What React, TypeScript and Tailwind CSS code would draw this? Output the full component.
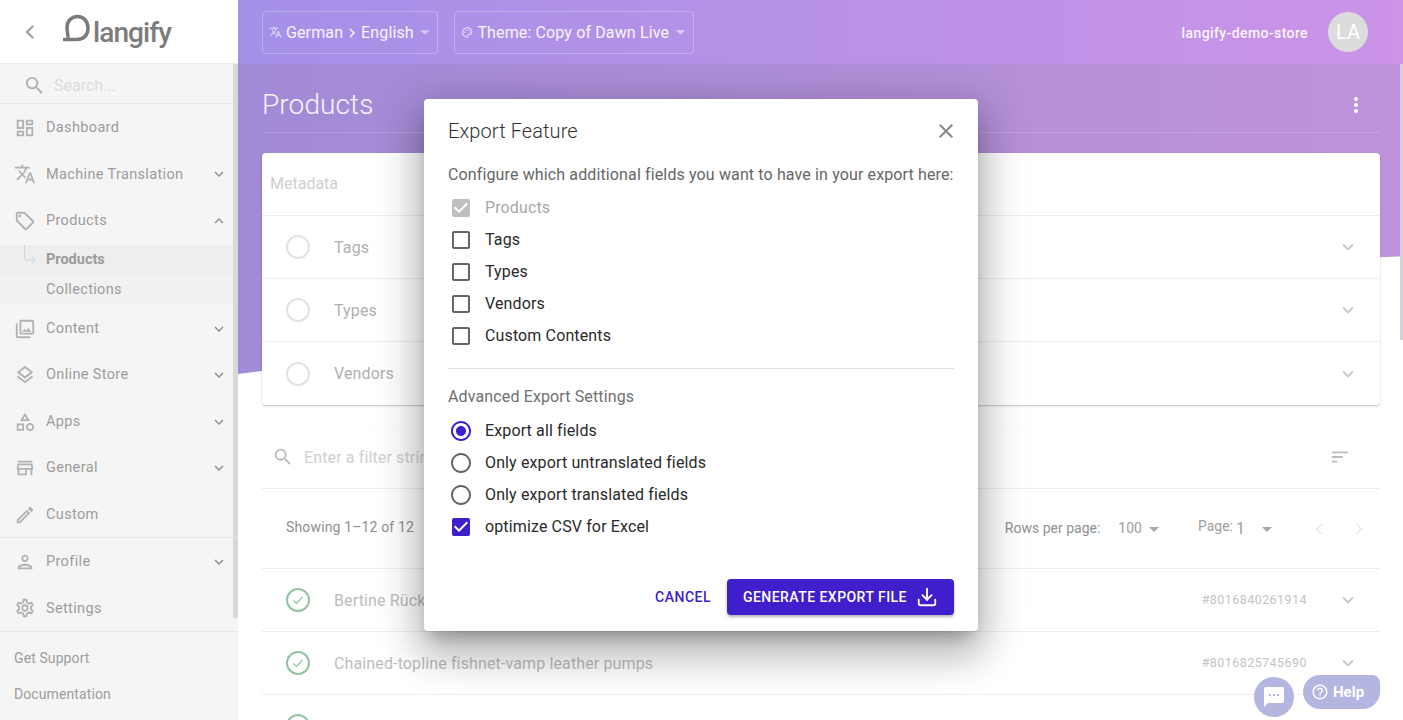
import React from 'react';
import { Download } from 'lucide-react';
import {
  MdArrowDropDown,
  MdCheckBox,
  MdCheckBoxOutlineBlank,
  MdChevronLeft,
  MdChevronRight,
  MdClose,
  MdExpandLess,
  MdExpandMore,
  MdHelpOutline,
  MdMoreVert,
  MdOutlineCategory,
  MdOutlineDashboard,
  MdOutlineEdit,
  MdOutlineLayers,
  MdOutlineLocalOffer,
  MdOutlinePalette,
  MdOutlinePerson,
  MdOutlinePhotoLibrary,
  MdOutlineSettings,
  MdOutlineStore,
  MdRadioButtonChecked,
  MdRadioButtonUnchecked,
  MdSearch,
  MdSms,
  MdSort,
  MdTranslate,
} from 'react-icons/md';

type NavItem = { label: string; icon: React.ElementType; open?: boolean; chevron?: boolean };

const navTop: NavItem[] = [
  { label: 'Dashboard', icon: MdOutlineDashboard },
  { label: 'Machine Translation', icon: MdTranslate, chevron: true },
  { label: 'Products', icon: MdOutlineLocalOffer, chevron: true, open: true },
];

const navMiddle: NavItem[] = [
  { label: 'Content', icon: MdOutlinePhotoLibrary, chevron: true },
  { label: 'Online Store', icon: MdOutlineLayers, chevron: true },
  { label: 'Apps', icon: MdOutlineCategory, chevron: true },
  { label: 'General', icon: MdOutlineStore, chevron: true },
  { label: 'Custom', icon: MdOutlineEdit },
];

const navBottom: NavItem[] = [
  { label: 'Profile', icon: MdOutlinePerson, chevron: true },
  { label: 'Settings', icon: MdOutlineSettings },
];

const NavRow = ({ item, height = 'h-[46.8px]' }: { item: NavItem; height?: string }) => {
  const Icon = item.icon;
  return (
    <div className={`${height} flex items-center pl-[14px] pr-[5px] text-[14.5px] text-[#9c9c9c]`}>
      <Icon className="w-[22px] h-[22px] text-[#b2b2b2] shrink-0" />
      <span className="ml-[10px] flex-1 tracking-[0.35px]">{item.label}</span>
      {item.chevron &&
        (item.open ? (
          <MdExpandLess className="w-[18px] h-[18px] text-[#8f8f8f]" />
        ) : (
          <MdExpandMore className="w-[18px] h-[18px] text-[#8f8f8f]" />
        ))}
    </div>
  );
};

const Sidebar = () => (
  <aside className="w-[238px] shrink-0 h-full flex flex-col bg-[#f5f5f5] relative z-10">
    <div className="h-[64px] bg-white border-b border-[#ececec] flex items-center shrink-0">
      <MdChevronLeft className="w-[28px] h-[28px] ml-[16px] text-[#a8a8a8]" />
      <svg viewBox="0 0 28 27" className="w-[28px] h-[28px] ml-[19px] mb-[7px] text-[#7c7c7c]" fill="none">
        <path
          d="M1 25 H14 C21 25 25 20 25 14 C25 7 21 2 14.5 2 C8 2 4 7 4 13 C4 17 5 20 5 22"
          stroke="currentColor"
          strokeWidth="3.5"
          strokeLinecap="round"
        />
      </svg>
      <span className="ml-[2px] text-[28px] leading-none font-medium tracking-[-0.9px] text-[#7c7c7c] mt-[3px]">langify</span>
    </div>
    <div className="flex-1 min-h-0 flex">
      <div className="flex-1 min-w-0">
        <div className="h-[40.2px] border-b border-[#e8e8e8] flex items-center pl-[23px] pt-[4px]">
          <MdSearch className="w-[23px] h-[23px] text-[#b0b0b0]" />
          <span className="ml-[8px] text-[16px] text-[#dcdcdc]">Search...</span>
        </div>
        {navTop.map((item) => (
          <NavRow key={item.label} item={item} />
        ))}
        <div className="bg-[#f1f1f1] h-[60.7px] text-[14.5px] text-[#9c9c9c] tracking-[0.35px]">
          <div className="relative h-[30.35px] bg-[#eeeeee] flex items-center pl-[46px] pt-px font-bold tracking-normal">
            <svg viewBox="0 0 12 19" className="absolute left-[24px] top-0 w-[12px] h-[19px] text-[#d4d4d4]" fill="none" stroke="currentColor" strokeWidth="1">
              <path d="M0.5 0 V13 Q0.5 15 2.5 15 H11 M8 12 L11 15 L8 18" />
            </svg>
            Products
          </div>
          <div className="h-[30.35px] flex items-center pl-[46px]">Collections</div>
        </div>
        {navMiddle.map((item) => (
          <NavRow key={item.label} item={item} height="h-[46.5px]" />
        ))}
      </div>
      <div className="w-[5px] h-[554px] bg-[#d9d9d9] shrink-0" />
    </div>
    <div className="absolute left-0 right-0 top-[537px] h-px bg-[#e6e6e6]" />
    <div className="absolute left-0 right-[5px] top-[538.3px]">
      {navBottom.map((item) => (
        <NavRow key={item.label} item={item} />
      ))}
    </div>
    <div className="absolute left-0 right-0 top-[631px] border-t border-[#e6e6e6] pt-[8px] pl-[14px] text-[14px] text-[#9c9c9c] tracking-[0.1px]">
      <div className="h-[36px] flex items-center">Get Support</div>
      <div className="h-[36px] flex items-center">Documentation</div>
    </div>
  </aside>
);

const HeaderSelect = ({ icon, children, width }: { icon: React.ReactNode; children: React.ReactNode; width: string }) => (
  <div className={`h-[43px] ${width} border border-white/25 rounded-[4px] flex items-center pl-[6px] text-[16px] text-white/90`}>
    {icon}
    <span className="ml-[4px] pt-[2px] flex-1 flex items-center whitespace-nowrap tracking-[0.13px]">{children}</span>
    <MdArrowDropDown className="w-[24px] h-[24px] text-white/50 mr-[1px]" />
  </div>
);

const TopBar = () => (
  <header className="h-[64px] shrink-0 flex items-center pl-[24px] pr-[35px] relative">
    <div className="flex gap-[16px]">
      <HeaderSelect width="w-[176px]" icon={<MdTranslate className="w-[14px] h-[14px] text-white/70" />}>
        German
        <MdChevronRight className="w-[18px] h-[18px]" />
        English
      </HeaderSelect>
      <HeaderSelect width="w-[240px]" icon={<MdOutlinePalette className="w-[13px] h-[13px] text-white/70" />}>
        Theme: Copy of Dawn Live
      </HeaderSelect>
    </div>
    <div className="ml-auto flex items-center gap-[20px]">
      <span className="pt-[2px] text-[14px] font-medium tracking-[0.4px] text-white/90">langify-demo-store</span>
      <div className="w-[40px] h-[40px] rounded-full bg-[#dcdcdc] text-white text-[20px] flex items-center justify-center">LA</div>
    </div>
  </header>
);

const EmptyCircle = () => <div className="w-[24px] h-[24px] rounded-full border-2 border-[#e2e2e2] shrink-0" />;

const DoneCircle = () => (
  <svg viewBox="0 0 24 24" className="w-[24px] h-[24px] shrink-0" fill="none" stroke="#91c3a3">
    <circle cx="12" cy="12" r="11" strokeWidth="2" />
    <path d="M7.5 12.5l3 3 6-6.5" strokeWidth="1.2" />
  </svg>
);

const FeatureRow = ({ label, last }: { label: string; last?: boolean }) => (
  <div className={`h-[63px] flex items-center pl-[24px] pr-[21px] ${last ? '' : 'border-b border-[#eeeeee]'}`}>
    <EmptyCircle />
    <span className="ml-[24px] pt-px flex-1 text-[16px] tracking-[0.13px] text-[#b0b0b0]">{label}</span>
    <MdExpandMore className="w-[22px] h-[22px] text-[#c8c8c8]" />
  </div>
);

const ProductRow = ({ name, id }: { name: string; id?: string }) => (
  <div className="h-[63px] shrink-0 flex items-center pl-[24px] pr-[21px] border-b border-[#eeeeee]">
    <DoneCircle />
    <span className="ml-[24px] pt-px flex-1 text-[16px] tracking-[0.13px] text-[#bdbdbd] whitespace-nowrap">{name}</span>
    {id && <span className="mr-[30px] text-[12.5px] tracking-[0.45px] text-[#c4c4c4]">{id}</span>}
    <MdExpandMore className="w-[22px] h-[22px] text-[#c8c8c8]" />
  </div>
);

const MainContent = () => (
  <div className="flex-1 min-h-0 pl-[24px] pr-[23px] overflow-hidden relative">
    <div className="h-[69px] flex items-center justify-between border-b border-white/15 pt-[13px]">
      <h1 className="text-[28px] font-light tracking-[0.1px] text-white/90 leading-none">Products</h1>
      <MdMoreVert className="w-[24px] h-[24px] text-white mr-[12px]" />
    </div>
    <section className="mt-[20px] bg-white rounded-[4px] shadow-[0_1px_2px_rgba(0,0,0,0.25)]">
      <div className="h-[63px] flex items-center pl-[8px] border-b border-[#eeeeee] text-[16px] text-[#cfcfcf]">Metadata</div>
      <FeatureRow label="Tags" />
      <FeatureRow label="Types" />
      <FeatureRow label="Vendors" last />
    </section>
    <section className="mt-[21px] bg-white rounded-[4px] shadow-[0_0_2px_rgba(0,0,0,0.06)] flex flex-col">
      <div className="h-[63px] shrink-0 flex items-center pl-[10px] pr-[29px] border-b border-[#eeeeee]">
        <MdSearch className="w-[22px] h-[22px] text-[#bdbdbd]" />
        <span className="ml-[10px] pt-px flex-1 text-[16px] tracking-[0.13px] text-[#d0d0d0]">Enter a filter string</span>
        <MdSort className="w-[22px] h-[22px] text-[#bdbdbd]" />
      </div>
      <div className="h-[80px] shrink-0 flex items-center pl-[24px] pr-[10px] border-b border-[#eeeeee] text-[14px] text-[#8f8f8f]">
        <span className="flex-1 mb-[2px] tracking-[0.15px]">Showing 1–12 of 12</span>
        <span>Rows per page:</span>
        <span className="ml-[18px] text-[#a0a0a0]">100</span>
        <MdArrowDropDown className="w-[24px] h-[24px] text-[#a8a8a8] mr-[32px]" />
        <span className="mb-[4px] mr-[3px] text-[#a0a0a0]">Page:</span>
        <span className="text-[16px] text-[#a0a0a0]">1</span>
        <MdArrowDropDown className="w-[24px] h-[24px] text-[#a8a8a8] ml-[10px] mr-[29px]" />
        <MdChevronLeft className="w-[22px] h-[22px] text-[#ececec] mr-[18px]" />
        <MdChevronRight className="w-[22px] h-[22px] text-[#ececec]" />
      </div>
      <ProductRow name="Bertine Rücksack" id="#8016840261914" />
      <ProductRow name="Chained-topline fishnet-vamp leather pumps" id="#8016825745690" />
      <ProductRow name="Suave grey canvas Mütze" />
    </section>
  </div>
);

const CheckRow = ({ icon, label, muted }: { icon: React.ReactNode; label: string; muted?: boolean }) => (
  <div className="h-[32px] flex items-center pl-px">
    {icon}
    <span className={`ml-[12px] text-[16px] tracking-[0.13px] ${muted ? 'text-[#a8a8a8]' : 'text-[#2a2a2a]'}`}>{label}</span>
  </div>
);

const iconOff = 'w-[24px] h-[24px] text-[#666666]';
const iconOn = 'w-[24px] h-[24px] text-[#3f1ecb]';

const ExportDialog = () => (
  <div className="absolute inset-0 z-20 flex justify-center items-start pt-[99px] pointer-events-none">
    <div className="w-[554px] h-[532px] ml-[-1px] bg-white rounded-[4px] px-[24px] shadow-[0_11px_15px_-7px_rgba(0,0,0,0.25),0_24px_38px_3px_rgba(0,0,0,0.18),0_9px_46px_8px_rgba(0,0,0,0.16)] flex flex-col">
      <div className="h-[65px] shrink-0 flex items-center justify-between pb-px">
        <h2 className="text-[20px] font-light text-[#333333] tracking-[0.1px]">Export Feature</h2>
        <MdClose className="w-[24px] h-[24px] text-[#8a8a8a] -mr-[4px]" />
      </div>
      <p className="text-[16px] leading-[22px] text-[#666666] tracking-[0.13px] whitespace-nowrap">
        Configure which additional fields you want to have in your export here:
      </p>
      <div className="mt-[6px]">
        <CheckRow muted label="Products" icon={<MdCheckBox className="w-[24px] h-[24px] text-[#bfbfbf]" />} />
        <CheckRow label="Tags" icon={<MdCheckBoxOutlineBlank className={iconOff} />} />
        <CheckRow label="Types" icon={<MdCheckBoxOutlineBlank className={iconOff} />} />
        <CheckRow label="Vendors" icon={<MdCheckBoxOutlineBlank className={iconOff} />} />
        <CheckRow label="Custom Contents" icon={<MdCheckBoxOutlineBlank className={iconOff} />} />
      </div>
      <div className="h-px bg-[#e0e0e0] mt-[16px]" />
      <p className="mt-[17px] text-[16px] leading-[22px] tracking-[0.13px] text-[#707070]">Advanced Export Settings</p>
      <div className="mt-[7px]">
        <CheckRow label="Export all fields" icon={<MdRadioButtonChecked className={iconOn} />} />
        <CheckRow label="Only export untranslated fields" icon={<MdRadioButtonUnchecked className={iconOff} />} />
        <CheckRow label="Only export translated fields" icon={<MdRadioButtonUnchecked className={iconOff} />} />
        <CheckRow label="optimize CSV for Excel" icon={<MdCheckBox className={iconOn} />} />
      </div>
      <div className="mt-auto mb-[16px] flex items-center justify-end">
        <span className="text-[14px] font-medium tracking-[0.5px] text-[#3f1ecb]">CANCEL</span>
        <button className="ml-[16px] h-[36px] w-[227px] rounded-[4px] bg-[#3f1ecb] pl-[16px] text-white text-[14px] font-medium tracking-[0.45px] flex items-center gap-[9px] shadow-[0_2px_3px_rgba(0,0,0,0.3)]">
          GENERATE EXPORT FILE
          <Download className="w-[22px] h-[22px]" strokeWidth={2} />
        </button>
      </div>
    </div>
  </div>
);

const SupportWidgets = () => (
  <>
    <div className="absolute z-30 left-[1254px] top-[677px] w-[40px] h-[40px] rounded-full bg-[#b3b6e0] flex items-center justify-center">
      <MdSms className="w-[24px] h-[24px] text-white" />
    </div>
    <div className="absolute z-30 left-[1303px] top-[675px] w-[77px] h-[34px] rounded-[17px] rounded-tr-[8px] bg-[#b3b6e0] flex items-center pl-[8px] text-white text-[15px] font-bold">
      <MdHelpOutline className="w-[18px] h-[18px] mr-[4px]" />
      Help
    </div>
  </>
);

export default function App() {
  return (
    <div className="relative w-[1403px] h-[720px] overflow-hidden bg-white flex font-['Roboto',sans-serif]">
      <Sidebar />
      <main className="relative flex-1 min-w-0 flex flex-col">
        {/* wave behind the page head, darker below the top bar */}
        <div className="absolute inset-x-0 top-0 h-[374px] bg-gradient-to-r from-[#a18ad6] to-[#bf93db] [clip-path:polygon(0_100%,25%_90%,50%_80%,75%_72%,100%_68.5%,100%_0,0_0)]" />
        <div className="absolute inset-x-0 top-0 h-[64px] bg-gradient-to-r from-[#a490e8] to-[#cc93e7]" />
        <TopBar />
        <MainContent />
        <div className="absolute right-0 top-[64px] w-[3px] h-[276px] bg-[#d4d0da]" />
      </main>
      <ExportDialog />
      <SupportWidgets />
    </div>
  );
}
